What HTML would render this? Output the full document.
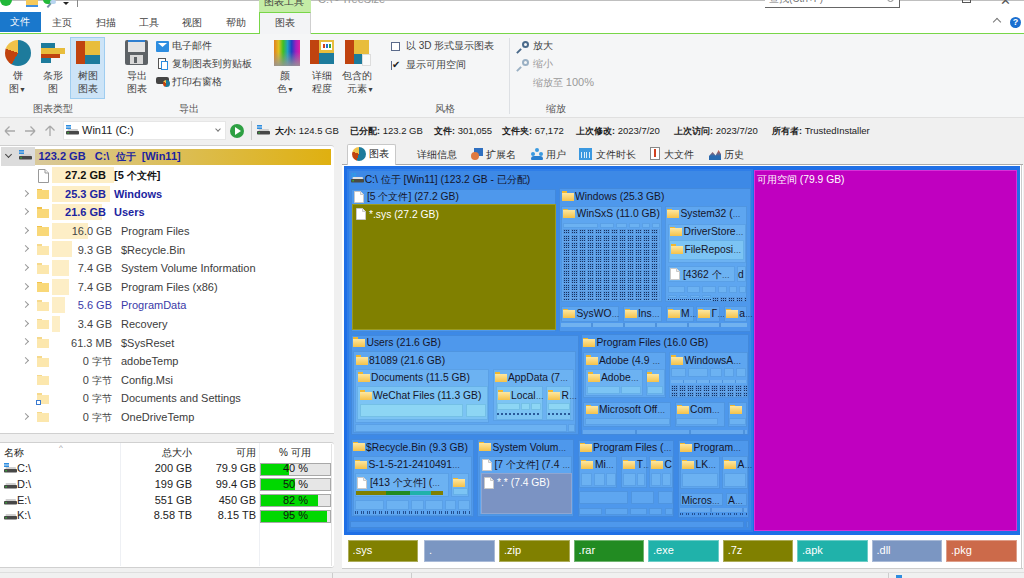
<!DOCTYPE html>
<html><head><meta charset="utf-8">
<style>
*{box-sizing:border-box;margin:0;padding:0}
html,body{width:1024px;height:578px;overflow:hidden;background:#fff;font-family:"Liberation Sans",sans-serif;font-size:11px;color:#222;position:relative}
.a{position:absolute;white-space:nowrap;line-height:1}
.c{font-size:10px}
.g{color:#444}
</style></head><body>
<!-- ===== title bar ===== -->
<div class="a" style="left:0;top:0;width:1024px;height:1px;background:#bfbfbf"></div>
<div class="a" style="left:0;top:-6px;width:12px;height:12px;border-radius:6px;background:#22b83a"></div>
<div class="a" style="left:26px;top:0;width:12px;height:5px;background:#f6c95a"></div>
<div class="a" style="left:26px;top:5px;width:12px;height:2px;background:#3f8ee0"></div>
<div class="a" style="left:43px;top:-5px;width:11px;height:9px;border-radius:5px;background:#22b83a"></div>
<div class="a" style="left:50px;top:0px;width:6px;height:4px;border-radius:3px;background:#b8d4f0"></div>
<div class="a" style="left:48px;top:3px;width:2px;height:5px;background:#7a8ea8;transform:rotate(40deg)"></div>
<div class="a" style="left:63px;top:2px;width:0;height:0;border-left:3px solid transparent;border-right:3px solid transparent;border-top:3px solid #222"></div>
<div class="a" style="left:77px;top:0;width:1px;height:7px;background:#888"></div>
<div class="a" style="left:259px;top:0;width:52px;height:12px;background:#c4eca6"></div>
<div class="a c" style="left:264px;top:-3px;color:#3f3f3f">图表工具</div>
<div class="a" style="left:318px;top:-6px;color:#999;font-size:11px">C:\ - TreeSize</div>
<div class="a" style="left:765px;top:0;width:135px;height:8px;border-bottom:1px solid #666;border-right:1px solid #666;background:#fff"></div>
<div class="a c" style="left:769px;top:-6px;color:#777">查找(Ctrl+F)</div>
<div class="a" style="left:887px;top:-5px;width:7px;height:7px;border:1px solid #888;border-radius:4px"></div>
<div class="a" style="left:962px;top:-5px;width:9px;height:8px;border:1px solid #555"></div>
<div class="a" style="left:1000px;top:-6px;color:#555;font-size:13px">✕</div>
<!-- ===== tabs ===== -->
<div class="a" style="left:0;top:12px;width:41px;height:20px;background:#1a78cc"></div>
<div class="a c" style="left:10px;top:17px;color:#fff">文件</div>
<div class="a c" style="left:52px;top:18px;color:#3f3f3f">主页</div>
<div class="a c" style="left:96px;top:18px;color:#3f3f3f">扫描</div>
<div class="a c" style="left:139px;top:18px;color:#3f3f3f">工具</div>
<div class="a c" style="left:182px;top:18px;color:#3f3f3f">视图</div>
<div class="a c" style="left:226px;top:18px;color:#3f3f3f">帮助</div>
<div class="a" style="left:259px;top:12px;width:52px;height:23px;background:#f3f4f6;border-left:1px solid #78d648;border-top:1px solid #78d648;border-right:1px solid #cfcfcf"></div>
<div class="a c" style="left:275px;top:18px;color:#3f3f3f">图表</div>
<div class="a" style="left:0;top:33px;width:259px;height:1px;background:#78d648"></div>
<div class="a" style="left:311px;top:33px;width:713px;height:1px;background:#78d648"></div>
<div class="a" style="left:994px;top:19px;width:6px;height:6px;border-left:1px solid #777;border-top:1px solid #777;transform:rotate(45deg)"></div>
<div class="a" style="left:1010px;top:17px;width:11px;height:11px;border-radius:6px;background:#1a6fd0;color:#fff;font-size:9px;font-weight:bold;text-align:center;line-height:11px">?</div>
<!-- ===== ribbon ===== -->
<div class="a" style="left:0;top:34px;width:1024px;height:84px;background:#f5f6f7;border-bottom:1px solid #e0e0e0"></div>

<!-- chart type group -->
<div class="a" style="left:5px;top:40px;width:26px;height:26px;border-radius:13px;background:conic-gradient(#1d7b9c 0deg 210deg,#c0430f 210deg 290deg,#f0c24a 290deg 360deg)"></div>
<div class="a" style="left:41px;top:43px;width:14px;height:5px;background:#1d7b9c"></div>
<div class="a" style="left:41px;top:48px;width:24px;height:6px;background:#e8bd3c"></div>
<div class="a" style="left:41px;top:54px;width:19px;height:4px;background:#c0430f"></div>
<div class="a" style="left:41px;top:58px;width:10px;height:5px;background:#1d7b9c"></div>
<div class="a" style="left:70px;top:37px;width:35px;height:62px;background:#cde4f7;border:1px solid #9fcdf0"></div>
<div class="a" style="left:76px;top:41px;width:9px;height:23px;background:#c0430f"></div>
<div class="a" style="left:85px;top:41px;width:15px;height:14px;background:#e8bd3c"></div>
<div class="a" style="left:85px;top:55px;width:15px;height:9px;background:#1d7b9c"></div>
<div class="a c" style="left:13px;top:71px;color:#3f3f3f">饼</div>
<div class="a c" style="left:9px;top:84px;color:#3f3f3f">图<span style="font-size:7px">▼</span></div>
<div class="a c" style="left:43px;top:71px;color:#3f3f3f">条形</div>
<div class="a c" style="left:48px;top:84px;color:#3f3f3f">图</div>
<div class="a c" style="left:78px;top:71px;color:#3f3f3f">树图</div>
<div class="a c" style="left:78px;top:84px;color:#3f3f3f">图表</div>
<div class="a c" style="left:33px;top:104px;color:#555">图表类型</div>
<!-- export group -->
<div class="a" style="left:125px;top:40px;width:23px;height:25px;background:#5d6266;border-radius:2px"></div>
<div class="a" style="left:128px;top:40px;width:17px;height:2px;background:#2f7fd0"></div>
<div class="a" style="left:128px;top:42px;width:17px;height:10px;background:#e4e4e4"></div>
<div class="a" style="left:130px;top:55px;width:13px;height:9px;background:#d8d8d8"></div>
<div class="a" style="left:134px;top:57px;width:3px;height:6px;background:#5d6266"></div>
<div class="a c" style="left:127px;top:71px;color:#3f3f3f">导出</div>
<div class="a c" style="left:127px;top:84px;color:#3f3f3f">图表</div>
<div class="a" style="left:156px;top:41px;width:13px;height:11px;background:#2d8de0;border-radius:1px"></div>
<div class="a" style="left:158px;top:43px;width:9px;height:4px;background:#fff;clip-path:polygon(0 0,100% 0,50% 100%)"></div>
<div class="a c" style="left:172px;top:41px;color:#3f3f3f">电子邮件</div>
<div class="a" style="left:158px;top:58px;width:8px;height:11px;border:1px solid #555;background:#fff"></div>
<div class="a" style="left:161px;top:61px;width:7px;height:9px;border:1px solid #2d8de0;background:#fff"></div>
<div class="a c" style="left:172px;top:59px;color:#3f3f3f">复制图表到剪贴板</div>
<div class="a" style="left:156px;top:77px;width:13px;height:7px;background:#444;border-radius:2px"></div>
<div class="a" style="left:163px;top:80px;width:7px;height:7px;border-radius:4px;background:conic-gradient(#1d7b9c 0 200deg,#c0430f 200deg 300deg,#f0c24a 300deg)"></div>
<div class="a c" style="left:172px;top:77px;color:#3f3f3f">打印右窗格</div>
<div class="a c" style="left:179px;top:104px;color:#555">导出</div>
<!-- style group -->
<div class="a" style="left:274px;top:40px;width:26px;height:26px;background:linear-gradient(180deg,rgba(150,150,150,0) 0%,rgba(150,150,150,0) 45%,rgba(150,150,150,.9) 100%),linear-gradient(90deg,#e08020,#e0c020 18%,#40c020 35%,#20a0c0 52%,#2040c0 68%,#a020c0 84%,#e020a0)"></div>
<div class="a" style="left:310px;top:40px;width:9px;height:24px;background:#c0430f"></div>
<div class="a" style="left:319px;top:40px;width:15px;height:13px;background:#e8bd3c"></div>
<div class="a" style="left:319px;top:53px;width:15px;height:11px;background:#1d7b9c"></div>
<div class="a" style="left:321px;top:42px;width:11px;height:8px;background:#fff"></div>
<div class="a" style="left:323px;top:44px;width:2px;height:4px;background:#d04020"></div>
<div class="a" style="left:326px;top:44px;width:2px;height:4px;background:#2070d0"></div>
<div class="a" style="left:329px;top:44px;width:2px;height:4px;background:#30a040"></div>
<div class="a" style="left:345px;top:40px;width:9px;height:24px;background:#c0430f"></div>
<div class="a" style="left:354px;top:40px;width:15px;height:14px;background:#e8bd3c"></div>
<div class="a" style="left:354px;top:54px;width:15px;height:10px;background:#1d7b9c"></div>
<div class="a" style="left:362px;top:54px;width:9px;height:12px;background:#fafafa;border:1px solid #ddd"></div>
<div class="a c" style="left:280px;top:71px;color:#3f3f3f">颜</div>
<div class="a c" style="left:277px;top:84px;color:#3f3f3f">色<span style="font-size:7px">▼</span></div>
<div class="a c" style="left:312px;top:71px;color:#3f3f3f">详细</div>
<div class="a c" style="left:312px;top:84px;color:#3f3f3f">程度</div>
<div class="a c" style="left:342px;top:71px;color:#3f3f3f">包含的</div>
<div class="a c" style="left:347px;top:84px;color:#3f3f3f">元素<span style="font-size:7px">▼</span></div>
<div class="a" style="left:391px;top:42px;width:9px;height:9px;border:1px solid #5a6a8a;background:#fff"></div>
<div class="a c" style="left:406px;top:41px;color:#3f3f3f">以 3D 形式显示图表</div>
<div class="a" style="left:391px;top:61px;width:9px;height:9px;border-left:1px solid #5a6a8a"></div>
<div class="a" style="left:392px;top:60px;color:#222;font-size:10px">✔</div>
<div class="a c" style="left:406px;top:60px;color:#3f3f3f">显示可用空间</div>
<div class="a c" style="left:435px;top:104px;color:#555">风格</div>
<div class="a" style="left:509px;top:38px;width:1px;height:76px;background:#dde0e4"></div>
<!-- zoom group -->
<div class="a" style="left:522px;top:41px;width:7px;height:7px;border-radius:4px;border:2px solid #4a6a8a"></div>
<div class="a" style="left:518px;top:48px;width:2px;height:6px;background:#4a6a8a;transform:rotate(45deg)"></div>
<div class="a c" style="left:533px;top:41px;color:#3f3f3f">放大</div>
<div class="a" style="left:522px;top:59px;width:7px;height:7px;border-radius:4px;border:2px solid #9ab0c4"></div>
<div class="a" style="left:518px;top:66px;width:2px;height:6px;background:#9ab0c4;transform:rotate(45deg)"></div>
<div class="a c" style="left:533px;top:59px;color:#999">缩小</div>
<div class="a c" style="left:533px;top:77px;color:#999">缩放至 <span style="font-size:11px">100%</span></div>
<div class="a c" style="left:546px;top:104px;color:#555">缩放</div>


<!-- ===== address row ===== -->
<div class="a" style="left:0;top:118px;width:1024px;height:460px;background:#f0f0f0"></div>
<svg class="a" style="left:0;top:120px" width="60" height="22" viewBox="0 0 60 22">
<g fill="none" stroke="#a8a8a8" stroke-width="1.3">
<path d="M5 11 H15 M5 11 L9.5 6.5 M5 11 L9.5 15.5"/>
<path d="M35 11 H25 M35 11 L30.5 6.5 M35 11 L30.5 15.5"/>
<path d="M50 6 V16 M50 6 L45.5 10.5 M50 6 L54.5 10.5"/>
</g></svg>
<div class="a" style="left:63px;top:121px;width:163px;height:19px;background:#fff;border:1px solid #e6e6e6"></div>
<svg class="a" style="left:66px;top:125px" width="13" height="10" viewBox="0 0 13 10"><rect x="0" y="0" width="5" height="1.6" fill="#2d8de0"/><rect x="0" y="2.4" width="5" height="1.6" fill="#2d8de0"/><rect x="1.5" y="4" width="10.5" height="2.2" rx="1" fill="#cfcfcf"/><rect x="0" y="6" width="13" height="3.5" rx="0.8" fill="#474747"/><rect x="1.3" y="7.3" width="1.6" height="1" fill="#3c3"/></svg>
<div class="a" style="left:82px;top:125px;color:#222">Win11 (C:)</div>
<div class="a" style="left:216px;top:127px;width:4px;height:4px;border-right:1px solid #777;border-bottom:1px solid #777;transform:rotate(45deg)"></div>
<div class="a" style="left:230px;top:124px;width:14px;height:14px;border-radius:7px;background:#2ea043"></div>
<div class="a" style="left:235px;top:127px;width:0;height:0;border-top:4px solid transparent;border-bottom:4px solid transparent;border-left:6px solid #fff"></div>
<div class="a" style="left:251px;top:121px;width:1px;height:19px;background:#ccc"></div>
<svg class="a" style="left:257px;top:125px" width="13" height="10" viewBox="0 0 13 10"><rect x="0" y="0" width="5" height="1.6" fill="#2d8de0"/><rect x="0" y="2.4" width="5" height="1.6" fill="#2d8de0"/><rect x="1.5" y="4" width="10.5" height="2.2" rx="1" fill="#cfcfcf"/><rect x="0" y="6" width="13" height="3.5" rx="0.8" fill="#474747"/><rect x="1.3" y="7.3" width="1.6" height="1" fill="#3c3"/></svg>
<div class="a" style="left:275px;top:125.5px;font-size:9.5px;color:#222"><b style="font-size:9px">大小:</b> 124.5 GB</div>
<div class="a" style="left:350px;top:125.5px;font-size:9.5px;color:#222"><b style="font-size:9px">已分配:</b> 123.2 GB</div>
<div class="a" style="left:434px;top:125.5px;font-size:9.5px;color:#222"><b style="font-size:9px">文件:</b> 301,055</div>
<div class="a" style="left:502px;top:125.5px;font-size:9.5px;color:#222"><b style="font-size:9px">文件夹:</b> 67,172</div>
<div class="a" style="left:576px;top:125.5px;font-size:9.5px;color:#222"><b style="font-size:9px">上次修改:</b> 2023/7/20</div>
<div class="a" style="left:674px;top:125.5px;font-size:9.5px;color:#222"><b style="font-size:9px">上次访问:</b> 2023/7/20</div>
<div class="a" style="left:772px;top:125.5px;font-size:9.5px;color:#222"><b style="font-size:9px">所有者:</b> TrustedInstaller</div>
<!-- ===== tree panel ===== -->
<div class="a" style="left:0;top:145px;width:334px;height:289px;background:#fff;border-bottom:1px solid #d0d0d0;border-top:1px solid #cfcfcf;border-radius:0 3px 0 0"></div>
<div class="a" style="left:1px;top:147px;width:34px;height:19px;background:#dcdcdc"></div>
<div class="a" style="left:35px;top:148.8px;width:296px;height:16.2px;background:linear-gradient(90deg,#d9c99a,#dcbc4c 55%,#dfb010)"></div>
<div class="a" style="left:6px;top:152px;width:5px;height:5px;border-right:1px solid #444;border-bottom:1px solid #444;transform:rotate(45deg)"></div>
<svg class="a" style="left:19px;top:150px" width="13" height="10" viewBox="0 0 13 10"><rect x="0" y="0" width="5" height="1.6" fill="#2d8de0"/><rect x="0" y="2.4" width="5" height="1.6" fill="#2d8de0"/><rect x="1.5" y="4" width="10.5" height="2.2" rx="1" fill="#cfcfcf"/><rect x="0" y="6" width="13" height="3.5" rx="0.8" fill="#474747"/><rect x="1.3" y="7.3" width="1.6" height="1" fill="#3c3"/></svg>
<div class="a" style="left:38.5px;top:151px;font-weight:bold;color:#1c24a0;font-size:11px">123.2 GB&nbsp;&nbsp; C:\&nbsp; <span class="c">位于</span>&nbsp; [Win11]</div>
<div class="a" style="left:52px;top:167.0px;width:62px;height:16px;background:#fdeec6"></div><svg class="a" style="left:38px;top:169.0px" width="11" height="14" viewBox="0 0 11 14"><path d="M0.5 0.5H7L10.5 4V13.5H0.5Z" fill="#fff" stroke="#999"/><path d="M7 0.5V4H10.5" fill="#f4f4f4" stroke="#999"/></svg><div class="a" style="left:0;width:106px;text-align:right;top:170.0px;font-weight:bold;color:#111">27.2 GB</div><div class="a" style="left:114px;top:170.0px;font-weight:bold;color:#111">[5 <span class="c">个文件</span>]</div>
<div class="a" style="left:52px;top:185.6px;width:58px;height:16px;background:#fdeec6"></div><div class="a" style="left:23px;top:190.6px;width:5px;height:5px;border-right:1px solid #999;border-top:1px solid #999;transform:rotate(45deg)"></div><div class="a" style="left:37px;top:188.6px;width:5px;height:2px;background:#f2c24c"></div><div class="a" style="left:37px;top:190.1px;width:12px;height:9px;background:#f9d878"></div><div class="a" style="left:0;width:106px;text-align:right;top:188.6px;font-weight:bold;color:#1c24a0">25.3 GB</div><div class="a" style="left:114px;top:188.6px;font-weight:bold;color:#1c24a0">Windows</div>
<div class="a" style="left:52px;top:204.2px;width:50px;height:16px;background:#fdeec6"></div><div class="a" style="left:23px;top:209.2px;width:5px;height:5px;border-right:1px solid #999;border-top:1px solid #999;transform:rotate(45deg)"></div><div class="a" style="left:37px;top:207.2px;width:5px;height:2px;background:#f2c24c"></div><div class="a" style="left:37px;top:208.7px;width:12px;height:9px;background:#f9d878"></div><div class="a" style="left:0;width:106px;text-align:right;top:207.2px;font-weight:bold;color:#1c24a0">21.6 GB</div><div class="a" style="left:114px;top:207.2px;font-weight:bold;color:#1c24a0">Users</div>
<div class="a" style="left:52px;top:222.8px;width:36px;height:16px;background:#fdeec6"></div><div class="a" style="left:23px;top:227.8px;width:5px;height:5px;border-right:1px solid #999;border-top:1px solid #999;transform:rotate(45deg)"></div><div class="a" style="left:37px;top:225.8px;width:5px;height:2px;background:#f2c24c"></div><div class="a" style="left:37px;top:227.3px;width:12px;height:9px;background:#f9d878"></div><div class="a" style="left:0;width:112px;text-align:right;top:225.9px;color:#444">16.0 GB</div><div class="a" style="left:121px;top:225.9px;color:#3c3c3c">Program Files</div>
<div class="a" style="left:52px;top:241.4px;width:20px;height:16px;background:#fdeec6"></div><div class="a" style="left:23px;top:246.4px;width:5px;height:5px;border-right:1px solid #999;border-top:1px solid #999;transform:rotate(45deg)"></div><div class="a" style="left:37px;top:244.4px;width:5px;height:2px;background:#f6d98c"></div><div class="a" style="left:37px;top:245.9px;width:12px;height:9px;background:#fce7ad"></div><div class="a" style="left:0;width:112px;text-align:right;top:244.5px;color:#444">9.3 GB</div><div class="a" style="left:121px;top:244.5px;color:#3c3c3c">$Recycle.Bin</div>
<div class="a" style="left:52px;top:260.0px;width:17px;height:16px;background:#fdeec6"></div><div class="a" style="left:23px;top:265.0px;width:5px;height:5px;border-right:1px solid #999;border-top:1px solid #999;transform:rotate(45deg)"></div><div class="a" style="left:37px;top:263.0px;width:5px;height:2px;background:#f6d98c"></div><div class="a" style="left:37px;top:264.5px;width:12px;height:9px;background:#fce7ad"></div><div class="a" style="left:0;width:112px;text-align:right;top:263.1px;color:#444">7.4 GB</div><div class="a" style="left:121px;top:263.1px;color:#3c3c3c">System Volume Information</div>
<div class="a" style="left:52px;top:278.6px;width:17px;height:16px;background:#fdeec6"></div><div class="a" style="left:23px;top:283.6px;width:5px;height:5px;border-right:1px solid #999;border-top:1px solid #999;transform:rotate(45deg)"></div><div class="a" style="left:37px;top:281.6px;width:5px;height:2px;background:#f2c24c"></div><div class="a" style="left:37px;top:283.1px;width:12px;height:9px;background:#f9d878"></div><div class="a" style="left:0;width:112px;text-align:right;top:281.7px;color:#444">7.4 GB</div><div class="a" style="left:121px;top:281.7px;color:#3c3c3c">Program Files (x86)</div>
<div class="a" style="left:52px;top:297.2px;width:13px;height:16px;background:#fdeec6"></div><div class="a" style="left:23px;top:302.2px;width:5px;height:5px;border-right:1px solid #999;border-top:1px solid #999;transform:rotate(45deg)"></div><div class="a" style="left:37px;top:300.2px;width:5px;height:2px;background:#f6d98c"></div><div class="a" style="left:37px;top:301.7px;width:12px;height:9px;background:#fce7ad"></div><div class="a" style="left:0;width:112px;text-align:right;top:300.3px;color:#3a3aa8">5.6 GB</div><div class="a" style="left:121px;top:300.3px;color:#3a3aa8">ProgramData</div>
<div class="a" style="left:52px;top:315.8px;width:8px;height:16px;background:#fdeec6"></div><div class="a" style="left:23px;top:320.8px;width:5px;height:5px;border-right:1px solid #999;border-top:1px solid #999;transform:rotate(45deg)"></div><div class="a" style="left:37px;top:318.8px;width:5px;height:2px;background:#f6d98c"></div><div class="a" style="left:37px;top:320.3px;width:12px;height:9px;background:#fce7ad"></div><div class="a" style="left:0;width:112px;text-align:right;top:318.9px;color:#444">3.4 GB</div><div class="a" style="left:121px;top:318.9px;color:#3c3c3c">Recovery</div>
<div class="a" style="left:23px;top:339.4px;width:5px;height:5px;border-right:1px solid #999;border-top:1px solid #999;transform:rotate(45deg)"></div><div class="a" style="left:37px;top:337.4px;width:5px;height:2px;background:#f6d98c"></div><div class="a" style="left:37px;top:338.9px;width:12px;height:9px;background:#fce7ad"></div><div class="a" style="left:0;width:112px;text-align:right;top:337.5px;color:#444">61.3 MB</div><div class="a" style="left:121px;top:337.5px;color:#3c3c3c">$SysReset</div>
<div class="a" style="left:23px;top:358.0px;width:5px;height:5px;border-right:1px solid #999;border-top:1px solid #999;transform:rotate(45deg)"></div><div class="a" style="left:37px;top:356.0px;width:5px;height:2px;background:#f6d98c"></div><div class="a" style="left:37px;top:357.5px;width:12px;height:9px;background:#fce7ad"></div><div class="a" style="left:0;width:112px;text-align:right;top:356.1px;color:#444">0 <span class="c">字节</span></div><div class="a" style="left:121px;top:356.1px;color:#3c3c3c">adobeTemp</div>
<div class="a" style="left:37px;top:374.6px;width:5px;height:2px;background:#f6d98c"></div><div class="a" style="left:37px;top:376.1px;width:12px;height:9px;background:#fce7ad"></div><div class="a" style="left:0;width:112px;text-align:right;top:374.7px;color:#444">0 <span class="c">字节</span></div><div class="a" style="left:121px;top:374.7px;color:#3c3c3c">Config.Msi</div>
<div class="a" style="left:37px;top:393.2px;width:5px;height:2px;background:#f6d98c"></div><div class="a" style="left:37px;top:394.7px;width:12px;height:9px;background:#fce7ad"></div><div class="a" style="left:36px;top:400.2px;width:5px;height:5px;background:#fff;border:1px solid #3a7ad0"></div><div class="a" style="left:0;width:112px;text-align:right;top:393.3px;color:#444">0 <span class="c">字节</span></div><div class="a" style="left:121px;top:393.3px;color:#3c3c3c">Documents and Settings</div>
<div class="a" style="left:23px;top:413.8px;width:5px;height:5px;border-right:1px solid #999;border-top:1px solid #999;transform:rotate(45deg)"></div><div class="a" style="left:37px;top:411.8px;width:5px;height:2px;background:#f6d98c"></div><div class="a" style="left:37px;top:413.3px;width:12px;height:9px;background:#fce7ad"></div><div class="a" style="left:0;width:112px;text-align:right;top:411.9px;color:#444">0 <span class="c">字节</span></div><div class="a" style="left:121px;top:411.9px;color:#3c3c3c">OneDriveTemp</div>

<!-- ===== drive list ===== -->
<div class="a" style="left:0;top:442px;width:334px;height:126px;background:#fff;border-top:1px solid #d0d0d0;border-bottom:1px solid #d0d0d0;border-radius:0 3px 3px 0"></div>
<div class="a" style="left:331px;top:444px;width:1px;height:122px;background:#e4e4e4"></div>
<div class="a" style="left:120px;top:443px;width:1px;height:123px;background:#eef0f4"></div>
<div class="a" style="left:259px;top:443px;width:1px;height:123px;background:#eef0f4"></div>
<div class="a c" style="left:4px;top:448px;color:#222">名称</div>
<div class="a" style="left:59px;top:444px;color:#999;font-size:8px">^</div>
<div class="a c" style="left:162px;top:448px;color:#222">总大小</div>
<div class="a c" style="left:236px;top:448px;color:#222">可用</div>
<div class="a c" style="left:279px;top:448px;color:#222">% 可用</div>
<svg class="a" style="left:4px;top:463px" width="13" height="10" viewBox="0 0 13 10"><rect x="0" y="0" width="5" height="1.6" fill="#2d8de0"/><rect x="0" y="2.4" width="5" height="1.6" fill="#2d8de0"/><rect x="1.5" y="4" width="10.5" height="2.2" rx="1" fill="#cfcfcf"/><rect x="0" y="6" width="13" height="3.5" rx="0.8" fill="#474747"/><rect x="1.3" y="7.3" width="1.6" height="1" fill="#3c3"/></svg><div class="a" style="left:17px;top:463.0px;color:#222">C:\</div><div class="a" style="left:100px;width:92px;text-align:right;top:463.0px;color:#222">200 GB</div><div class="a" style="left:160px;width:96px;text-align:right;top:463.0px;color:#222">79.9 GB</div><div class="a" style="left:260px;top:462.5px;width:71px;height:13px;background:#e6e6e6;border:1px solid #a8a8a8"></div><div class="a" style="left:261px;top:463.5px;width:28px;height:11px;background:#00d800"></div><div class="a" style="left:260px;width:71px;text-align:center;top:463.0px;color:#111">40 %</div>
<svg class="a" style="left:4px;top:479px" width="13" height="10" viewBox="0 0 13 10"><rect x="1.5" y="4" width="10.5" height="2.2" rx="1" fill="#cfcfcf"/><rect x="0" y="6" width="13" height="3.5" rx="0.8" fill="#474747"/><rect x="1.3" y="7.3" width="1.6" height="1" fill="#3c3"/></svg><div class="a" style="left:17px;top:478.8px;color:#222">D:\</div><div class="a" style="left:100px;width:92px;text-align:right;top:478.8px;color:#222">199 GB</div><div class="a" style="left:160px;width:96px;text-align:right;top:478.8px;color:#222">99.4 GB</div><div class="a" style="left:260px;top:478.3px;width:71px;height:13px;background:#e6e6e6;border:1px solid #a8a8a8"></div><div class="a" style="left:261px;top:479.3px;width:34px;height:11px;background:#00d800"></div><div class="a" style="left:260px;width:71px;text-align:center;top:478.8px;color:#111">50 %</div>
<svg class="a" style="left:4px;top:495px" width="13" height="10" viewBox="0 0 13 10"><rect x="1.5" y="4" width="10.5" height="2.2" rx="1" fill="#cfcfcf"/><rect x="0" y="6" width="13" height="3.5" rx="0.8" fill="#474747"/><rect x="1.3" y="7.3" width="1.6" height="1" fill="#3c3"/></svg><div class="a" style="left:17px;top:494.6px;color:#222">E:\</div><div class="a" style="left:100px;width:92px;text-align:right;top:494.6px;color:#222">551 GB</div><div class="a" style="left:160px;width:96px;text-align:right;top:494.6px;color:#222">450 GB</div><div class="a" style="left:260px;top:494.1px;width:71px;height:13px;background:#e6e6e6;border:1px solid #a8a8a8"></div><div class="a" style="left:261px;top:495.1px;width:57px;height:11px;background:#00d800"></div><div class="a" style="left:260px;width:71px;text-align:center;top:494.6px;color:#111">82 %</div>
<svg class="a" style="left:4px;top:510px" width="13" height="10" viewBox="0 0 13 10"><rect x="1.5" y="4" width="10.5" height="2.2" rx="1" fill="#cfcfcf"/><rect x="0" y="6" width="13" height="3.5" rx="0.8" fill="#474747"/><rect x="1.3" y="7.3" width="1.6" height="1" fill="#3c3"/></svg><div class="a" style="left:17px;top:510.4px;color:#222">K:\</div><div class="a" style="left:100px;width:92px;text-align:right;top:510.4px;color:#222">8.58 TB</div><div class="a" style="left:160px;width:96px;text-align:right;top:510.4px;color:#222">8.15 TB</div><div class="a" style="left:260px;top:509.9px;width:71px;height:13px;background:#e6e6e6;border:1px solid #a8a8a8"></div><div class="a" style="left:261px;top:510.9px;width:66px;height:11px;background:#00d800"></div><div class="a" style="left:260px;width:71px;text-align:center;top:510.4px;color:#111">95 %</div>
<!-- ===== right panel ===== -->
<div class="a" style="left:347px;top:144px;width:49px;height:22px;background:#fff;border:1px solid #c8c8c8;border-bottom:none;border-radius:2px 2px 0 0"></div>
<div class="a" style="left:352px;top:147px;width:14px;height:14px;border-radius:7px;background:conic-gradient(#1d7b9c 0deg 200deg,#c0430f 200deg 290deg,#f0c24a 290deg 360deg)"></div>
<div class="a c" style="left:369px;top:149px;color:#222">图表</div>
<div class="a c" style="left:417px;top:150px;color:#333">详细信息</div>
<div class="a c" style="left:486px;top:150px;color:#333">扩展名</div>
<div class="a c" style="left:545.5px;top:150px;color:#333">用户</div>
<div class="a c" style="left:596px;top:150px;color:#333">文件时长</div>
<div class="a c" style="left:664px;top:150px;color:#333">大文件</div>
<div class="a c" style="left:723.5px;top:150px;color:#333">历史</div>
<div class="a" style="left:474px;top:148px;width:9px;height:8px;background:#2f6fc0"></div><div class="a" style="left:471px;top:152px;width:8px;height:8px;border-radius:4px;background:#e07a40"></div>
<div class="a" style="left:535px;top:148px;width:4px;height:4px;border-radius:2px;background:#3a9ae0"></div><div class="a" style="left:531px;top:152px;width:4px;height:4px;border-radius:2px;background:#3a9ae0"></div><div class="a" style="left:539px;top:152px;width:4px;height:4px;border-radius:2px;background:#3a9ae0"></div><div class="a" style="left:531px;top:156px;width:12px;height:4px;border-radius:3px 3px 1px 1px;background:#2a80d0"></div>
<div class="a" style="left:579px;top:147.5px;width:13px;height:12px;background:#3a98e0"></div><div class="a" style="left:581px;top:152px;width:9px;height:6px;background:repeating-linear-gradient(90deg,#d8ecfa 0 1px,#3a98e0 1px 2.5px)"></div>
<div class="a" style="left:650px;top:147px;width:10px;height:13px;border:1px solid #888;background:#fff"></div><div class="a" style="left:654px;top:149px;width:1.5px;height:8px;background:#d04020"></div><div class="a" style="left:652px;top:150px;width:6px;height:3px;border-top:1.5px solid #d04020;transform:rotate(0deg);clip-path:polygon(50% 0,100% 100%,0 100%)"></div>
<div class="a" style="left:709px;top:150px;width:12px;height:10px;background:linear-gradient(180deg,#e06040,#2a6ab0 60%);clip-path:polygon(0 100%,0 60%,30% 20%,55% 55%,80% 0,100% 40%,100% 100%)"></div>
<div class="a" style="left:342px;top:164px;width:5px;height:1px;background:#aaa"></div>
<div class="a" style="left:396px;top:164px;width:627px;height:1px;background:#aaa"></div>
<div class="a" style="left:342px;top:165px;width:681px;height:403px;background:#fff"></div>
<div class="a" style="left:344.0px;top:165.5px;width:676.0px;height:369.5px;background:#1f6fe6;border:1px solid #1f6fe6"></div>
<div class="a" style="left:754px;top:170px;width:263px;height:361px;background:#c000c0;border:1px solid #d830d8"></div>
<div class="a" style="left:757.0px;top:175.0px;color:#fff;font-size:10.3px"><span class="c">可用空间</span> (79.9 GB)</div>
<div class="a" style="left:347.0px;top:169.0px;width:405.5px;height:362.5px;background:#3d89e6;border:1px solid #3580d8"></div>
<div class="a" style="left:347px;top:169px;width:405.5px;height:362.5px;border:2px solid #2f7ee8"></div>
<svg class="a" style="left:351px;top:173px" width="13" height="10" viewBox="0 0 13 10"><rect x="0.5" y="0" width="1.8" height="1.8" fill="#2d9de8"/><rect x="3" y="0" width="1.8" height="1.8" fill="#2d9de8"/><rect x="0.5" y="2.4" width="1.8" height="1.8" fill="#2d9de8"/><rect x="3" y="2.4" width="1.8" height="1.8" fill="#2d9de8"/><rect x="1.5" y="4" width="10.5" height="2.2" rx="1" fill="#e0e0e0"/><rect x="0" y="6" width="13" height="3.5" rx="0.8" fill="#4a4a40"/><rect x="1.3" y="7.3" width="1.6" height="1" fill="#3c3"/></svg>
<div class="a" style="left:364.7px;top:175.0px;color:#15152a;font-size:10.3px">C:\ <span class="c">位于</span> [Win11] (123.2 GB - <span class="c">已分配</span>)</div>
<div class="a" style="left:350.8px;top:189.0px;width:205.7px;height:143.0px;background:#4e98ec;border:1px solid #4289dc"></div>
<svg class="a" style="left:354.0px;top:190.6px" width="10" height="12" viewBox="0 0 10 12"><path d="M0.5 0.5H6.5L9.5 3.5V11.5H0.5Z" fill="#fff" stroke="#c8c8c8"/><path d="M6.5 0.5V3.5H9.5" fill="#eee" stroke="#c8c8c8"/></svg>
<div class="a" style="left:367.0px;top:192.2px;color:#15152a;font-size:10.3px">[5 <span class="c">个文件</span>] (27.2 GB)</div>
<div class="a" style="left:351.8px;top:204px;width:204px;height:125.5px;background:#808000;border:1px solid #9a9a20"></div>
<svg class="a" style="left:356.0px;top:208.2px" width="10" height="12" viewBox="0 0 10 12"><path d="M0.5 0.5H6.5L9.5 3.5V11.5H0.5Z" fill="#fff" stroke="#c8c8c8"/><path d="M6.5 0.5V3.5H9.5" fill="#eee" stroke="#c8c8c8"/></svg>
<div class="a" style="left:369.0px;top:209.8px;color:#fff;font-size:10.3px">*.sys (27.2 GB)</div>
<div class="a" style="left:559.0px;top:188.3px;width:191.6px;height:143.3px;background:#4e98ec;border:1px solid #4289dc"></div>
<div class="a" style="left:561.6px;top:191.0px;width:5px;height:2px;background:#f0b830"></div><div class="a" style="left:561.6px;top:192.5px;width:12px;height:8px;background:linear-gradient(180deg,#fde7a0,#f5c24a)"></div>
<div class="a" style="left:575.1px;top:191.6px;color:#15152a;font-size:10.3px">Windows (25.3 GB)</div>
<div class="a" style="left:561.0px;top:205.7px;width:101.0px;height:96.0px;background:#5ea6f0;border:1px solid #4f95e0"></div>
<div class="a" style="left:563.0px;top:208.8px;width:5px;height:2px;background:#f0b830"></div><div class="a" style="left:563.0px;top:210.3px;width:12px;height:8px;background:linear-gradient(180deg,#fde7a0,#f5c24a)"></div>
<div class="a" style="left:576.5px;top:209.4px;color:#15152a;font-size:10.3px">WinSxS (11.0 GB)</div>
<svg class="a" style="left:0;top:0" width="0" height="0"><defs><pattern id="dp" width="8" height="7" patternUnits="userSpaceOnUse"><rect width="8" height="7" fill="#5899e0"/><g fill="#18305e"><rect x="1" y="1" width="1" height="1"/><rect x="3" y="1" width="1" height="1"/><rect x="5" y="1" width="1" height="1"/><rect x="1" y="3" width="1" height="1"/><rect x="3" y="3" width="1" height="1"/><rect x="5" y="3" width="1" height="1"/><rect x="1" y="5" width="1" height="1"/><rect x="3" y="5" width="1" height="1"/><rect x="5" y="5" width="1" height="1"/></g><rect x="0" y="6" width="8" height="1" fill="#66a6ea"/><rect x="7" y="0" width="1" height="7" fill="#66a6ea"/></pattern><pattern id="dl" width="4" height="2" patternUnits="userSpaceOnUse"><rect x="0" y="0" width="1" height="1" fill="#1a3366"/><rect x="2" y="0" width="1" height="1" fill="#1a3366"/></pattern></defs></svg>
<svg class="a" style="left:563px;top:235px" width="97" height="65" shape-rendering="crispEdges"><rect width="97" height="65" fill="url(#dp)"/></svg>
<div class="a" style="left:563.0px;top:222.5px;width:35.0px;height:5.0px;background:#6cb2f2;border:1px solid #5aa0e6"></div>
<div class="a" style="left:600.0px;top:222.5px;width:14.0px;height:5.0px;background:#6cb2f2;border:1px solid #5aa0e6"></div>
<div class="a" style="left:616.0px;top:222.5px;width:11.0px;height:5.0px;background:#6cb2f2;border:1px solid #5aa0e6"></div>
<div class="a" style="left:629.0px;top:222.5px;width:11.0px;height:5.0px;background:#6cb2f2;border:1px solid #5aa0e6"></div>
<div class="a" style="left:642.0px;top:222.5px;width:8.0px;height:5.0px;background:#6cb2f2;border:1px solid #5aa0e6"></div>
<div class="a" style="left:652.0px;top:222.5px;width:8.0px;height:5.0px;background:#6cb2f2;border:1px solid #5aa0e6"></div>
<svg class="a" style="left:563px;top:229px" width="97" height="5" shape-rendering="crispEdges"><rect width="97" height="5" fill="url(#dp)"/></svg>
<div class="a" style="left:664.8px;top:205.7px;width:82.2px;height:96.0px;background:#5ea6f0;border:1px solid #4f95e0"></div>
<div class="a" style="left:667.0px;top:208.8px;width:5px;height:2px;background:#f0b830"></div><div class="a" style="left:667.0px;top:210.3px;width:12px;height:8px;background:linear-gradient(180deg,#fde7a0,#f5c24a)"></div>
<div class="a" style="left:680.5px;top:209.4px;color:#15152a;font-size:10.3px">System32 (<span style="font-size:8px;letter-spacing:-0.5px">…</span></div>
<div class="a" style="left:667.6px;top:223.7px;width:78.4px;height:39.3px;background:#6cb2f2;border:1px solid #5aa0e6"></div>
<div class="a" style="left:670.0px;top:226.5px;width:5px;height:2px;background:#f0b830"></div><div class="a" style="left:670.0px;top:228.0px;width:12px;height:8px;background:linear-gradient(180deg,#fde7a0,#f5c24a)"></div>
<div class="a" style="left:683.5px;top:227.1px;color:#15152a;font-size:10.3px">DriverStore<span style="font-size:8px;letter-spacing:-0.5px">…</span></div>
<div class="a" style="left:669.0px;top:240.3px;width:74.7px;height:19.7px;background:#7cc4f4;border:1px solid #66b0e8"></div>
<div class="a" style="left:671.0px;top:244.0px;width:5px;height:2px;background:#f0b830"></div><div class="a" style="left:671.0px;top:245.5px;width:12px;height:8px;background:linear-gradient(180deg,#fde7a0,#f5c24a)"></div>
<div class="a" style="left:684.5px;top:244.6px;color:#15152a;font-size:10.3px">FileReposi<span style="font-size:8px;letter-spacing:-0.5px">…</span></div>
<div class="a" style="left:667.6px;top:265.8px;width:67.2px;height:16.6px;background:#6cb2f2;border:1px solid #5aa0e6"></div>
<svg class="a" style="left:670.0px;top:268.0px" width="10" height="12" viewBox="0 0 10 12"><path d="M0.5 0.5H6.5L9.5 3.5V11.5H0.5Z" fill="#fff" stroke="#c8c8c8"/><path d="M6.5 0.5V3.5H9.5" fill="#eee" stroke="#c8c8c8"/></svg>
<div class="a" style="left:683.0px;top:269.6px;color:#15152a;font-size:10.3px">[4362 <span class="c">个</span><span style="font-size:8px;letter-spacing:-0.5px">…</span></div>
<div class="a" style="left:737.0px;top:265.8px;width:9.0px;height:16.6px;background:#6cb2f2;border:1px solid #5aa0e6"></div>
<div class="a" style="left:738.0px;top:269.6px;color:#15152a;font-size:10.3px">d</div>
<div class="a" style="left:668.0px;top:286.0px;width:17.0px;height:7.0px;background:#6cb2f2;border:1px solid #5aa0e6"></div>
<div class="a" style="left:687.0px;top:286.0px;width:13.0px;height:7.0px;background:#6cb2f2;border:1px solid #5aa0e6"></div>
<div class="a" style="left:702.0px;top:286.0px;width:14.0px;height:7.0px;background:#6cb2f2;border:1px solid #5aa0e6"></div>
<div class="a" style="left:718.0px;top:286.0px;width:9.0px;height:7.0px;background:#6cb2f2;border:1px solid #5aa0e6"></div>
<div class="a" style="left:729.0px;top:286.0px;width:8.0px;height:7.0px;background:#6cb2f2;border:1px solid #5aa0e6"></div>
<div class="a" style="left:739.0px;top:286.0px;width:7.0px;height:7.0px;background:#6cb2f2;border:1px solid #5aa0e6"></div>
<div class="a" style="left:668.0px;top:295.0px;width:9.0px;height:3.0px;background:#6cb2f2;border:1px solid #5aa0e6"></div>
<div class="a" style="left:679.0px;top:295.0px;width:9.0px;height:3.0px;background:#6cb2f2;border:1px solid #5aa0e6"></div>
<div class="a" style="left:690.0px;top:295.0px;width:10.0px;height:3.0px;background:#6cb2f2;border:1px solid #5aa0e6"></div>
<div class="a" style="left:702.0px;top:295.0px;width:9.0px;height:3.0px;background:#6cb2f2;border:1px solid #5aa0e6"></div>
<svg class="a" style="left:712px;top:297px" width="34" height="4" shape-rendering="crispEdges"><rect width="34" height="4" fill="url(#dp)"/></svg>
<svg class="a" style="left:668px;top:299px" width="44" height="2" shape-rendering="crispEdges"><rect width="44" height="2" fill="url(#dl)"/></svg>
<div class="a" style="left:561.0px;top:306.0px;width:58.0px;height:15.5px;background:#5ea6f0;border:1px solid #4f95e0"></div>
<div class="a" style="left:563.0px;top:308.8px;width:5px;height:2px;background:#f0b830"></div><div class="a" style="left:563.0px;top:310.3px;width:12px;height:8px;background:linear-gradient(180deg,#fde7a0,#f5c24a)"></div>
<div class="a" style="left:576.5px;top:309.4px;color:#15152a;font-size:10.3px">SysWO<span style="font-size:8px;letter-spacing:-0.5px">…</span></div>
<div class="a" style="left:622.5px;top:306.0px;width:39.5px;height:15.5px;background:#5ea6f0;border:1px solid #4f95e0"></div>
<div class="a" style="left:624.5px;top:308.8px;width:5px;height:2px;background:#f0b830"></div><div class="a" style="left:624.5px;top:310.3px;width:12px;height:8px;background:linear-gradient(180deg,#fde7a0,#f5c24a)"></div>
<div class="a" style="left:638.0px;top:309.4px;color:#15152a;font-size:10.3px">Ins<span style="font-size:8px;letter-spacing:-0.5px">…</span></div>
<div class="a" style="left:665.6px;top:306.0px;width:28.4px;height:15.5px;background:#5ea6f0;border:1px solid #4f95e0"></div>
<div class="a" style="left:667.6px;top:308.8px;width:5px;height:2px;background:#f0b830"></div><div class="a" style="left:667.6px;top:310.3px;width:12px;height:8px;background:linear-gradient(180deg,#fde7a0,#f5c24a)"></div>
<div class="a" style="left:681.1px;top:309.4px;color:#15152a;font-size:10.3px">M<span style="font-size:8px;letter-spacing:-0.5px">…</span></div>
<div class="a" style="left:696.0px;top:306.0px;width:24.0px;height:15.5px;background:#5ea6f0;border:1px solid #4f95e0"></div>
<div class="a" style="left:698.0px;top:308.8px;width:5px;height:2px;background:#f0b830"></div><div class="a" style="left:698.0px;top:310.3px;width:12px;height:8px;background:linear-gradient(180deg,#fde7a0,#f5c24a)"></div>
<div class="a" style="left:711.5px;top:309.4px;color:#15152a;font-size:10.3px">Γ<span style="font-size:8px;letter-spacing:-0.5px">…</span></div>
<div class="a" style="left:723.8px;top:306.0px;width:23.2px;height:15.5px;background:#5ea6f0;border:1px solid #4f95e0"></div>
<div class="a" style="left:725.8px;top:308.8px;width:5px;height:2px;background:#f0b830"></div><div class="a" style="left:725.8px;top:310.3px;width:12px;height:8px;background:linear-gradient(180deg,#fde7a0,#f5c24a)"></div>
<div class="a" style="left:739.3px;top:309.4px;color:#15152a;font-size:10.3px">a<span style="font-size:8px;letter-spacing:-0.5px">…</span></div>
<div class="a" style="left:561px;top:322.5px;width:186px;height:4px;background:repeating-linear-gradient(90deg,#70b2f0 0 30px,#4e92dc 30px 32px)"></div>
<div class="a" style="left:351.0px;top:334.8px;width:227.5px;height:100.2px;background:#4e98ec;border:1px solid #4289dc"></div>
<div class="a" style="left:353.0px;top:337.0px;width:5px;height:2px;background:#f0b830"></div><div class="a" style="left:353.0px;top:338.5px;width:12px;height:8px;background:linear-gradient(180deg,#fde7a0,#f5c24a)"></div>
<div class="a" style="left:366.5px;top:337.6px;color:#15152a;font-size:10.3px">Users (21.6 GB)</div>
<div class="a" style="left:353.4px;top:351.4px;width:222.9px;height:81.5px;background:#5ea6f0;border:1px solid #4f95e0"></div>
<div class="a" style="left:355.5px;top:355.0px;width:5px;height:2px;background:#f0b830"></div><div class="a" style="left:355.5px;top:356.5px;width:12px;height:8px;background:linear-gradient(180deg,#fde7a0,#f5c24a)"></div>
<div class="a" style="left:369.0px;top:355.6px;color:#15152a;font-size:10.3px">81089 (21.6 GB)</div>
<div class="a" style="left:355.0px;top:369.0px;width:134.4px;height:53.7px;background:#6cb2f2;border:1px solid #5aa0e6"></div>
<div class="a" style="left:357.5px;top:372.0px;width:5px;height:2px;background:#f0b830"></div><div class="a" style="left:357.5px;top:373.5px;width:12px;height:8px;background:linear-gradient(180deg,#fde7a0,#f5c24a)"></div>
<div class="a" style="left:371.0px;top:372.6px;color:#15152a;font-size:10.3px">Documents (11.5 GB)</div>
<div class="a" style="left:357.0px;top:386.0px;width:130.7px;height:34.0px;background:#7cc4f4;border:1px solid #66b0e8"></div>
<div class="a" style="left:359.5px;top:390.0px;width:5px;height:2px;background:#f0b830"></div><div class="a" style="left:359.5px;top:391.5px;width:12px;height:8px;background:linear-gradient(180deg,#fde7a0,#f5c24a)"></div>
<div class="a" style="left:373.0px;top:390.6px;color:#15152a;font-size:10.3px">WeChat Files (11.3 GB)</div>
<div class="a" style="left:359.5px;top:403.6px;width:103.8px;height:13.0px;background:#8dd6f4;border:1px solid #74c0e6"></div>
<div class="a" style="left:465.7px;top:403.6px;width:20.1px;height:13.0px;background:#8dd6f4;border:1px solid #74c0e6"></div>
<div class="a" style="left:492.6px;top:369.0px;width:81.3px;height:52.4px;background:#6cb2f2;border:1px solid #5aa0e6"></div>
<div class="a" style="left:494.5px;top:372.0px;width:5px;height:2px;background:#f0b830"></div><div class="a" style="left:494.5px;top:373.5px;width:12px;height:8px;background:linear-gradient(180deg,#fde7a0,#f5c24a)"></div>
<div class="a" style="left:508.0px;top:372.6px;color:#15152a;font-size:10.3px">AppData (7<span style="font-size:8px;letter-spacing:-0.5px">…</span></div>
<div class="a" style="left:495.5px;top:386.0px;width:47.1px;height:33.7px;background:#7cc4f4;border:1px solid #66b0e8"></div>
<div class="a" style="left:497.5px;top:390.0px;width:5px;height:2px;background:#f0b830"></div><div class="a" style="left:497.5px;top:391.5px;width:12px;height:8px;background:linear-gradient(180deg,#fde7a0,#f5c24a)"></div>
<div class="a" style="left:511.0px;top:390.6px;color:#15152a;font-size:10.3px">Local<span style="font-size:8px;letter-spacing:-0.5px">…</span></div>
<div class="a" style="left:496.5px;top:403.0px;width:23.5px;height:7.0px;background:#8dd6f4;border:1px solid #74c0e6"></div>
<div class="a" style="left:521.0px;top:403.0px;width:9.0px;height:7.0px;background:#8dd6f4;border:1px solid #74c0e6"></div>
<div class="a" style="left:531.0px;top:403.0px;width:10.0px;height:7.0px;background:#8dd6f4;border:1px solid #74c0e6"></div>
<div class="a" style="left:497px;top:413px;width:44px;height:2px;background:repeating-linear-gradient(90deg,#2a5a9a 0 2px,transparent 2px 4px)"></div>
<div class="a" style="left:546.3px;top:386.0px;width:25.1px;height:33.7px;background:#7cc4f4;border:1px solid #66b0e8"></div>
<div class="a" style="left:548.0px;top:390.0px;width:5px;height:2px;background:#f0b830"></div><div class="a" style="left:548.0px;top:391.5px;width:12px;height:8px;background:linear-gradient(180deg,#fde7a0,#f5c24a)"></div>
<div class="a" style="left:561.5px;top:390.6px;color:#15152a;font-size:10.3px">R<span style="font-size:8px;letter-spacing:-0.5px">…</span></div>
<div class="a" style="left:547.5px;top:403.0px;width:22.5px;height:7.0px;background:#8dd6f4;border:1px solid #74c0e6"></div>
<div class="a" style="left:548px;top:413px;width:22px;height:2px;background:repeating-linear-gradient(90deg,#2a5a9a 0 2px,transparent 2px 4px)"></div>
<div class="a" style="left:355.0px;top:423.9px;width:211.6px;height:7.8px;background:#6cb2f2;border:1px solid #5aa0e6"></div>
<div class="a" style="left:568.0px;top:423.9px;width:7.0px;height:7.8px;background:#6cb2f2;border:1px solid #5aa0e6"></div>
<div class="a" style="left:581.2px;top:334.3px;width:168.2px;height:100.7px;background:#4e98ec;border:1px solid #4289dc"></div>
<div class="a" style="left:583.0px;top:337.6px;width:5px;height:2px;background:#f0b830"></div><div class="a" style="left:583.0px;top:339.1px;width:12px;height:8px;background:linear-gradient(180deg,#fde7a0,#f5c24a)"></div>
<div class="a" style="left:596.5px;top:338.2px;color:#15152a;font-size:10.3px">Program Files (16.0 GB)</div>
<div class="a" style="left:583.3px;top:351.6px;width:83.1px;height:46.1px;background:#5ea6f0;border:1px solid #4f95e0"></div>
<div class="a" style="left:585.5px;top:355.3px;width:5px;height:2px;background:#f0b830"></div><div class="a" style="left:585.5px;top:356.8px;width:12px;height:8px;background:linear-gradient(180deg,#fde7a0,#f5c24a)"></div>
<div class="a" style="left:599.0px;top:355.9px;color:#15152a;font-size:10.3px">Adobe (4.9 <span style="font-size:8px;letter-spacing:-0.5px">…</span></div>
<div class="a" style="left:585.4px;top:369.0px;width:57.6px;height:26.6px;background:#6cb2f2;border:1px solid #5aa0e6"></div>
<div class="a" style="left:587.5px;top:372.0px;width:5px;height:2px;background:#f0b830"></div><div class="a" style="left:587.5px;top:373.5px;width:12px;height:8px;background:linear-gradient(180deg,#fde7a0,#f5c24a)"></div>
<div class="a" style="left:601.0px;top:372.6px;color:#15152a;font-size:10.3px">Adobe<span style="font-size:8px;letter-spacing:-0.5px">…</span></div>
<div class="a" style="left:587.0px;top:385.6px;width:33.0px;height:8.4px;background:#7cc4f4;border:1px solid #66b0e8"></div>
<div class="a" style="left:621.0px;top:385.6px;width:20.0px;height:8.4px;background:#7cc4f4;border:1px solid #66b0e8"></div>
<div class="a" style="left:645.6px;top:369.0px;width:19.1px;height:26.6px;background:#6cb2f2;border:1px solid #5aa0e6"></div>
<div class="a" style="left:647.0px;top:372.0px;width:5px;height:2px;background:#f0b830"></div><div class="a" style="left:647.0px;top:373.5px;width:12px;height:8px;background:linear-gradient(180deg,#fde7a0,#f5c24a)"></div>
<div class="a" style="left:660.5px;top:372.6px;color:#15152a;font-size:10.3px"></div>
<div class="a" style="left:647.0px;top:385.6px;width:16.0px;height:8.4px;background:#7cc4f4;border:1px solid #66b0e8"></div>
<div class="a" style="left:668.9px;top:351.6px;width:78.9px;height:46.1px;background:#5ea6f0;border:1px solid #4f95e0"></div>
<div class="a" style="left:671.0px;top:355.3px;width:5px;height:2px;background:#f0b830"></div><div class="a" style="left:671.0px;top:356.8px;width:12px;height:8px;background:linear-gradient(180deg,#fde7a0,#f5c24a)"></div>
<div class="a" style="left:684.5px;top:355.9px;color:#15152a;font-size:10.3px">WindowsA<span style="font-size:8px;letter-spacing:-0.5px">…</span></div>
<div class="a" style="left:671.0px;top:368.0px;width:15.0px;height:9.0px;background:#6cb2f2;border:1px solid #5aa0e6"></div>
<div class="a" style="left:688.0px;top:368.0px;width:20.0px;height:9.0px;background:#6cb2f2;border:1px solid #5aa0e6"></div>
<div class="a" style="left:710.0px;top:368.0px;width:12.0px;height:9.0px;background:#6cb2f2;border:1px solid #5aa0e6"></div>
<div class="a" style="left:724.0px;top:368.0px;width:10.0px;height:9.0px;background:#6cb2f2;border:1px solid #5aa0e6"></div>
<div class="a" style="left:736.0px;top:368.0px;width:10.0px;height:9.0px;background:#6cb2f2;border:1px solid #5aa0e6"></div>
<div class="a" style="left:671px;top:380px;width:75px;height:3px;background:repeating-linear-gradient(90deg,#70b2f0 0 12px,#4e92dc 12px 13px)"></div>
<svg class="a" style="left:671px;top:385px" width="76" height="12" shape-rendering="crispEdges"><rect width="76" height="12" fill="url(#dp)"/></svg>
<div class="a" style="left:583.3px;top:401.8px;width:88.2px;height:25.4px;background:#5ea6f0;border:1px solid #4f95e0"></div>
<div class="a" style="left:585.5px;top:404.5px;width:5px;height:2px;background:#f0b830"></div><div class="a" style="left:585.5px;top:406.0px;width:12px;height:8px;background:linear-gradient(180deg,#fde7a0,#f5c24a)"></div>
<div class="a" style="left:599.0px;top:405.1px;color:#15152a;font-size:10.3px">Microsoft Off<span style="font-size:8px;letter-spacing:-0.5px">…</span></div>
<div class="a" style="left:585.0px;top:418.0px;width:85.0px;height:7.0px;background:#6cb2f2;border:1px solid #5aa0e6"></div>
<div class="a" style="left:674.7px;top:401.8px;width:50.2px;height:25.4px;background:#5ea6f0;border:1px solid #4f95e0"></div>
<div class="a" style="left:676.5px;top:404.5px;width:5px;height:2px;background:#f0b830"></div><div class="a" style="left:676.5px;top:406.0px;width:12px;height:8px;background:linear-gradient(180deg,#fde7a0,#f5c24a)"></div>
<div class="a" style="left:690.0px;top:405.1px;color:#15152a;font-size:10.3px">Com<span style="font-size:8px;letter-spacing:-0.5px">…</span></div>
<div class="a" style="left:676.0px;top:418.0px;width:42.0px;height:7.0px;background:#6cb2f2;border:1px solid #5aa0e6"></div>
<div class="a" style="left:728.2px;top:401.8px;width:19.3px;height:25.4px;background:#5ea6f0;border:1px solid #4f95e0"></div>
<div class="a" style="left:730.0px;top:404.5px;width:5px;height:2px;background:#f0b830"></div><div class="a" style="left:730.0px;top:406.0px;width:12px;height:8px;background:linear-gradient(180deg,#fde7a0,#f5c24a)"></div>
<div class="a" style="left:743.5px;top:405.1px;color:#15152a;font-size:10.3px"></div>
<div class="a" style="left:729.0px;top:418.0px;width:17.0px;height:7.0px;background:#6cb2f2;border:1px solid #5aa0e6"></div>
<div class="a" style="left:583px;top:429.9px;width:164px;height:4px;background:repeating-linear-gradient(90deg,#66a9ee 0 52px,#4e92dc 52px 54px)"></div>
<div class="a" style="left:350.5px;top:439.4px;width:123.5px;height:78.1px;background:#4e98ec;border:1px solid #4289dc"></div>
<div class="a" style="left:352.5px;top:441.9px;width:5px;height:2px;background:#f0b830"></div><div class="a" style="left:352.5px;top:443.4px;width:12px;height:8px;background:linear-gradient(180deg,#fde7a0,#f5c24a)"></div>
<div class="a" style="left:366.0px;top:442.5px;color:#15152a;font-size:10.3px">$Recycle.Bin (9.3 GB)</div>
<div class="a" style="left:352.9px;top:455.8px;width:118.8px;height:60.4px;background:#5ea6f0;border:1px solid #4f95e0"></div>
<div class="a" style="left:355.0px;top:459.7px;width:5px;height:2px;background:#f0b830"></div><div class="a" style="left:355.0px;top:461.2px;width:12px;height:8px;background:linear-gradient(180deg,#fde7a0,#f5c24a)"></div>
<div class="a" style="left:368.5px;top:460.3px;color:#15152a;font-size:10.3px">S-1-5-21-2410491<span style="font-size:8px;letter-spacing:-0.5px">…</span></div>
<div class="a" style="left:354.5px;top:473.4px;width:94.5px;height:23.6px;background:#6cb2f2;border:1px solid #5aa0e6"></div>
<svg class="a" style="left:357.0px;top:476.7px" width="10" height="12" viewBox="0 0 10 12"><path d="M0.5 0.5H6.5L9.5 3.5V11.5H0.5Z" fill="#fff" stroke="#c8c8c8"/><path d="M6.5 0.5V3.5H9.5" fill="#eee" stroke="#c8c8c8"/></svg>
<div class="a" style="left:370.0px;top:478.3px;color:#15152a;font-size:10.3px">[413 <span class="c">个文件</span>] (<span style="font-size:8px;letter-spacing:-0.5px">…</span></div>
<div class="a" style="left:356px;top:490.5px;width:30px;height:4.5px;background:#808000"></div><div class="a" style="left:386px;top:490.5px;width:24px;height:4.5px;background:#228b22"></div><div class="a" style="left:410px;top:490.5px;width:21px;height:4.5px;background:#20b2aa"></div><div class="a" style="left:431px;top:490.5px;width:12px;height:4.5px;background:#808000"></div>
<div class="a" style="left:451.3px;top:473.4px;width:18.1px;height:23.6px;background:#6cb2f2;border:1px solid #5aa0e6"></div>
<div class="a" style="left:453.0px;top:477.7px;width:5px;height:2px;background:#f0b830"></div><div class="a" style="left:453.0px;top:479.2px;width:12px;height:8px;background:linear-gradient(180deg,#fde7a0,#f5c24a)"></div>
<div class="a" style="left:466.5px;top:478.3px;color:#15152a;font-size:10.3px"></div>
<div class="a" style="left:453.0px;top:488.0px;width:15.0px;height:7.0px;background:#7cc4f4;border:1px solid #66b0e8"></div>
<div class="a" style="left:354.5px;top:499.8px;width:29.5px;height:9.9px;background:#6cb2f2;border:1px solid #5aa0e6"></div>
<div class="a" style="left:386.0px;top:499.8px;width:23.0px;height:9.9px;background:#6cb2f2;border:1px solid #5aa0e6"></div>
<div class="a" style="left:411.0px;top:499.8px;width:13.0px;height:9.9px;background:#6cb2f2;border:1px solid #5aa0e6"></div>
<div class="a" style="left:425.0px;top:499.8px;width:18.0px;height:9.9px;background:#6cb2f2;border:1px solid #5aa0e6"></div>
<div class="a" style="left:445.0px;top:499.8px;width:11.0px;height:9.9px;background:#6cb2f2;border:1px solid #5aa0e6"></div>
<div class="a" style="left:458.0px;top:499.8px;width:12.0px;height:9.9px;background:#6cb2f2;border:1px solid #5aa0e6"></div>
<div class="a" style="left:355px;top:511px;width:115px;height:3px;background:repeating-linear-gradient(90deg,#234f90 0 1px,transparent 1px 2px,#234f90 2px 3px,transparent 3px 6px)"></div>
<div class="a" style="left:477.0px;top:439.4px;width:96.5px;height:78.1px;background:#4e98ec;border:1px solid #4289dc"></div>
<div class="a" style="left:479.0px;top:441.9px;width:5px;height:2px;background:#f0b830"></div><div class="a" style="left:479.0px;top:443.4px;width:12px;height:8px;background:linear-gradient(180deg,#fde7a0,#f5c24a)"></div>
<div class="a" style="left:492.5px;top:442.5px;color:#15152a;font-size:10.3px">System Volum<span style="font-size:8px;letter-spacing:-0.5px">…</span></div>
<div class="a" style="left:479.4px;top:455.8px;width:92.6px;height:59.7px;background:#5ea6f0;border:1px solid #4f95e0"></div>
<svg class="a" style="left:481.5px;top:458.7px" width="10" height="12" viewBox="0 0 10 12"><path d="M0.5 0.5H6.5L9.5 3.5V11.5H0.5Z" fill="#fff" stroke="#c8c8c8"/><path d="M6.5 0.5V3.5H9.5" fill="#eee" stroke="#c8c8c8"/></svg>
<div class="a" style="left:494.5px;top:460.3px;color:#15152a;font-size:10.3px">[7 <span class="c">个文件</span>] (7.4 <span style="font-size:8px;letter-spacing:-0.5px">…</span></div>
<div class="a" style="left:480.6px;top:473.4px;width:91px;height:41px;background:#7b93c3;border:1px solid #8ea6d2"></div>
<svg class="a" style="left:484.0px;top:476.7px" width="10" height="12" viewBox="0 0 10 12"><path d="M0.5 0.5H6.5L9.5 3.5V11.5H0.5Z" fill="#fff" stroke="#c8c8c8"/><path d="M6.5 0.5V3.5H9.5" fill="#eee" stroke="#c8c8c8"/></svg>
<div class="a" style="left:497.0px;top:478.3px;color:#fff;font-size:10.3px">*.* (7.4 GB)</div>
<div class="a" style="left:577.8px;top:439.8px;width:96.7px;height:77.7px;background:#4e98ec;border:1px solid #4289dc"></div>
<div class="a" style="left:579.5px;top:442.6px;width:5px;height:2px;background:#f0b830"></div><div class="a" style="left:579.5px;top:444.1px;width:12px;height:8px;background:linear-gradient(180deg,#fde7a0,#f5c24a)"></div>
<div class="a" style="left:593.0px;top:443.2px;color:#15152a;font-size:10.3px">Program Files (<span style="font-size:8px;letter-spacing:-0.5px">…</span></div>
<div class="a" style="left:579.4px;top:456.4px;width:38.1px;height:31.2px;background:#5ea6f0;border:1px solid #4f95e0"></div>
<div class="a" style="left:581.4px;top:459.8px;width:5px;height:2px;background:#f0b830"></div><div class="a" style="left:581.4px;top:461.3px;width:12px;height:8px;background:linear-gradient(180deg,#fde7a0,#f5c24a)"></div>
<div class="a" style="left:594.9px;top:460.4px;color:#15152a;font-size:10.3px">Mi<span style="font-size:8px;letter-spacing:-0.5px">…</span></div>
<div class="a" style="left:621.2px;top:456.4px;width:25.4px;height:31.2px;background:#5ea6f0;border:1px solid #4f95e0"></div>
<div class="a" style="left:623.2px;top:459.8px;width:5px;height:2px;background:#f0b830"></div><div class="a" style="left:623.2px;top:461.3px;width:12px;height:8px;background:linear-gradient(180deg,#fde7a0,#f5c24a)"></div>
<div class="a" style="left:636.7px;top:460.4px;color:#15152a;font-size:10.3px">T<span style="font-size:8px;letter-spacing:-0.5px">…</span></div>
<div class="a" style="left:649.0px;top:456.4px;width:23.5px;height:31.2px;background:#5ea6f0;border:1px solid #4f95e0"></div>
<div class="a" style="left:651.0px;top:459.8px;width:5px;height:2px;background:#f0b830"></div><div class="a" style="left:651.0px;top:461.3px;width:12px;height:8px;background:linear-gradient(180deg,#fde7a0,#f5c24a)"></div>
<div class="a" style="left:664.5px;top:460.4px;color:#15152a;font-size:10.3px">C</div>
<div class="a" style="left:581.0px;top:473.4px;width:11.0px;height:12.3px;background:#6cb2f2;border:1px solid #5aa0e6"></div>
<div class="a" style="left:594.0px;top:473.4px;width:11.0px;height:12.3px;background:#6cb2f2;border:1px solid #5aa0e6"></div>
<div class="a" style="left:606.0px;top:473.4px;width:10.0px;height:12.3px;background:#6cb2f2;border:1px solid #5aa0e6"></div>
<div class="a" style="left:623.0px;top:473.4px;width:13.0px;height:12.3px;background:#6cb2f2;border:1px solid #5aa0e6"></div>
<div class="a" style="left:637.0px;top:473.4px;width:8.0px;height:12.3px;background:#6cb2f2;border:1px solid #5aa0e6"></div>
<div class="a" style="left:651.0px;top:473.4px;width:10.0px;height:12.3px;background:#6cb2f2;border:1px solid #5aa0e6"></div>
<div class="a" style="left:662.0px;top:473.4px;width:9.0px;height:12.3px;background:#6cb2f2;border:1px solid #5aa0e6"></div>
<div class="a" style="left:579.0px;top:491.0px;width:49.0px;height:13.2px;background:#5ea6f0;border:1px solid #4f95e0"></div>
<div class="a" style="left:631.0px;top:491.0px;width:23.0px;height:13.2px;background:#5ea6f0;border:1px solid #4f95e0"></div>
<div class="a" style="left:658.0px;top:491.0px;width:14.5px;height:13.2px;background:#5ea6f0;border:1px solid #4f95e0"></div>
<div class="a" style="left:579.0px;top:507.7px;width:23.0px;height:7.3px;background:#5ea6f0;border:1px solid #4f95e0"></div>
<div class="a" style="left:605.0px;top:507.7px;width:23.0px;height:7.3px;background:#5ea6f0;border:1px solid #4f95e0"></div>
<div class="a" style="left:630.0px;top:507.7px;width:17.0px;height:7.3px;background:#5ea6f0;border:1px solid #4f95e0"></div>
<div class="a" style="left:649.0px;top:507.7px;width:13.0px;height:7.3px;background:#5ea6f0;border:1px solid #4f95e0"></div>
<div class="a" style="left:665.0px;top:507.7px;width:7.5px;height:7.3px;background:#5ea6f0;border:1px solid #4f95e0"></div>
<div class="a" style="left:678.4px;top:439.8px;width:71.1px;height:78.1px;background:#4e98ec;border:1px solid #4289dc"></div>
<div class="a" style="left:680.0px;top:442.6px;width:5px;height:2px;background:#f0b830"></div><div class="a" style="left:680.0px;top:444.1px;width:12px;height:8px;background:linear-gradient(180deg,#fde7a0,#f5c24a)"></div>
<div class="a" style="left:693.5px;top:443.2px;color:#15152a;font-size:10.3px">Program<span style="font-size:8px;letter-spacing:-0.5px">…</span></div>
<div class="a" style="left:680.3px;top:456.4px;width:39.7px;height:32.2px;background:#5ea6f0;border:1px solid #4f95e0"></div>
<div class="a" style="left:682.0px;top:459.8px;width:5px;height:2px;background:#f0b830"></div><div class="a" style="left:682.0px;top:461.3px;width:12px;height:8px;background:linear-gradient(180deg,#fde7a0,#f5c24a)"></div>
<div class="a" style="left:695.5px;top:460.4px;color:#15152a;font-size:10.3px">LK<span style="font-size:8px;letter-spacing:-0.5px">…</span></div>
<div class="a" style="left:682.0px;top:473.4px;width:36.0px;height:13.3px;background:#6cb2f2;border:1px solid #5aa0e6"></div>
<div class="a" style="left:722.3px;top:456.4px;width:25.4px;height:32.2px;background:#5ea6f0;border:1px solid #4f95e0"></div>
<div class="a" style="left:724.0px;top:459.8px;width:5px;height:2px;background:#f0b830"></div><div class="a" style="left:724.0px;top:461.3px;width:12px;height:8px;background:linear-gradient(180deg,#fde7a0,#f5c24a)"></div>
<div class="a" style="left:737.5px;top:460.4px;color:#15152a;font-size:10.3px">A<span style="font-size:8px;letter-spacing:-0.5px">…</span></div>
<div class="a" style="left:724.0px;top:473.4px;width:22.0px;height:13.3px;background:#6cb2f2;border:1px solid #5aa0e6"></div>
<div class="a" style="left:679.8px;top:492.5px;width:43.5px;height:13.7px;background:#5ea6f0;border:1px solid #4f95e0"></div>
<div class="a" style="left:681.5px;top:495.6px;color:#15152a;font-size:10.3px">Micros<span style="font-size:8px;letter-spacing:-0.5px">…</span></div>
<div class="a" style="left:726.3px;top:492.5px;width:21.0px;height:13.7px;background:#5ea6f0;border:1px solid #4f95e0"></div>
<div class="a" style="left:728.0px;top:495.6px;color:#15152a;font-size:10.3px">A<span style="font-size:8px;letter-spacing:-0.5px">…</span></div>
<div class="a" style="left:680px;top:508px;width:67px;height:4px;background:repeating-linear-gradient(90deg,#66a9ee 0 30px,#4e92dc 30px 32px)"></div>
<div class="a" style="left:680px;top:513px;width:67px;height:2px;background:repeating-linear-gradient(90deg,#234f90 0 1px,transparent 1px 2px,#234f90 2px 3px,transparent 3px 6px)"></div>
<div class="a" style="left:350.0px;top:520.5px;width:393.8px;height:7.2px;background:#4e98ec;border:1px solid #4289dc"></div>
<div class="a" style="left:745.8px;top:520.5px;width:3.2px;height:7.2px;background:#4e98ec;border:1px solid #4289dc"></div>
<div class="a" style="left:347.6px;top:540px;width:70.5px;height:22px;background:#808000;border:1px solid rgba(255,255,255,.35)"></div>
<div class="a" style="left:352.6px;top:545px;color:#fff">.sys</div>
<div class="a" style="left:424.0px;top:540px;width:70.5px;height:22px;background:#7b96c2;border:1px solid rgba(255,255,255,.35)"></div>
<div class="a" style="left:429.0px;top:545px;color:#fff">.</div>
<div class="a" style="left:499.0px;top:540px;width:70.5px;height:22px;background:#808000;border:1px solid rgba(255,255,255,.35)"></div>
<div class="a" style="left:504.0px;top:545px;color:#fff">.zip</div>
<div class="a" style="left:573.6px;top:540px;width:70.5px;height:22px;background:#228b22;border:1px solid rgba(255,255,255,.35)"></div>
<div class="a" style="left:578.6px;top:545px;color:#fff">.rar</div>
<div class="a" style="left:648.0px;top:540px;width:70.5px;height:22px;background:#20b2aa;border:1px solid rgba(255,255,255,.35)"></div>
<div class="a" style="left:653.0px;top:545px;color:#fff">.exe</div>
<div class="a" style="left:722.7px;top:540px;width:70.5px;height:22px;background:#808000;border:1px solid rgba(255,255,255,.35)"></div>
<div class="a" style="left:727.7px;top:545px;color:#fff">.7z</div>
<div class="a" style="left:797.0px;top:540px;width:70.5px;height:22px;background:#20b2aa;border:1px solid rgba(255,255,255,.35)"></div>
<div class="a" style="left:802.0px;top:545px;color:#fff">.apk</div>
<div class="a" style="left:871.5px;top:540px;width:70.5px;height:22px;background:#7b96c2;border:1px solid rgba(255,255,255,.35)"></div>
<div class="a" style="left:876.5px;top:545px;color:#fff">.dll</div>
<div class="a" style="left:946.0px;top:540px;width:70.5px;height:22px;background:#cc6a4a;border:1px solid rgba(255,255,255,.35)"></div>
<div class="a" style="left:951.0px;top:545px;color:#fff">.pkg</div>
<div class="a" style="left:342px;top:568px;width:681px;height:1px;background:#ccc"></div>
<div class="a" style="left:1021px;top:165px;width:1px;height:403px;background:#ccc"></div>
<div class="a" style="left:0;top:572px;width:1024px;height:6px;background:#f0f0f0;border-top:1px solid #dedede"></div>
<div class="a" style="left:411px;top:573px;width:1px;height:5px;background:#ccc"></div>
<div class="a" style="left:332px;top:573px;width:1px;height:5px;background:#ccc"></div>
<div class="a" style="left:888px;top:573px;width:1px;height:5px;background:#ccc"></div>
<div class="a" style="left:896px;top:575px;width:6px;height:3px;background:#2d8de0"></div>
</body></html>
